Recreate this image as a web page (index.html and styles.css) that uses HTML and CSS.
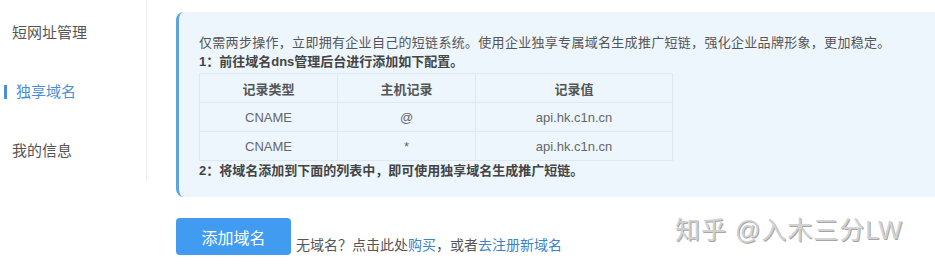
FILE: index.html
```html
<!DOCTYPE html>
<html lang="zh-CN">
<head>
<meta charset="utf-8">
<title>独享域名</title>
<link rel="stylesheet" href="styles.css">
</head>
<body>
<div class="page">
  <aside class="sidebar">
    <div class="nav-item">短网址管理</div>
    <div class="nav-item active">独享域名</div>
    <div class="nav-item">我的信息</div>
  </aside>
  <main class="main">
    <div class="alert">
      <p class="line intro">仅需两步操作，立即拥有企业自己的短链系统。使用企业独享专属域名生成推广短链，强化企业品牌形象，更加稳定。</p>
      <p class="line strong">1：前往域名dns管理后台进行添加如下配置。</p>
      <table class="records">
        <thead>
          <tr><th class="c1">记录类型</th><th class="c2">主机记录</th><th class="c3">记录值</th></tr>
        </thead>
        <tbody>
          <tr><td>CNAME</td><td>@</td><td>api.hk.c1n.cn</td></tr>
          <tr><td>CNAME</td><td>*</td><td>api.hk.c1n.cn</td></tr>
        </tbody>
      </table>
      <p class="line strong">2：将域名添加到下面的列表中，即可使用独享域名生成推广短链。</p>
    </div>
    <div class="actions">
      <button class="btn-primary">添加域名</button>
      <span class="hint">无域名？点击此处<a class="link">购买</a>，或者<a class="link">去注册新域名</a></span>
    </div>
  </main>
</div>
<div class="watermark">知乎 @入木三分LW</div>
</body>
</html>
```

FILE: styles.css
```css
html, body {
  margin: 0;
  padding: 0;
  background: #fff;
  overflow: hidden;
}
body {
  font-family: "Liberation Sans", "Noto Sans CJK SC", sans-serif;
  color: #555;
  width: 935px;
  height: 264px;
  position: relative;
}
.page {
  display: flex;
  align-items: flex-start;
}
.sidebar {
  width: 147px;
  height: 180px;
  border-right: 1px solid #eeeeee;
  padding-top: 3px;
  box-sizing: border-box;
  flex: none;
}
.nav-item {
  height: 59px;
  line-height: 59px;
  font-size: 15px;
  padding-left: 12px;
  color: #555;
  position: relative;
}
.nav-item.active {
  color: #4a8fd6;
  padding-left: 16px;
}
.nav-item.active::before {
  content: "";
  position: absolute;
  left: 4px;
  top: 23px;
  width: 3px;
  height: 14px;
  background: #4a8fd6;
}
.main {
  flex: 1;
  padding: 12px 0 0 29px;
  min-width: 0;
}
.alert {
  background: #edf6fd;
  border-left: 3px solid #5ea3dd;
  border-radius: 8px;
  padding: 21px 0 17px 20px;
  margin-right: -20px;
  box-sizing: border-box;
}
.line {
  margin: 0;
  font-size: 13px;
  line-height: 19px;
  color: #555;
  white-space: nowrap;
}
.line.intro {
  letter-spacing: 0.3px;
}
.line.strong {
  font-weight: bold;
  color: #444;
}
.records {
  border-collapse: collapse;
  margin: 2px 0 0 0;
  font-size: 13px;
  color: #666;
  width: 474px;
}
.records th,
.records td {
  border: 1px solid #dce9f3;
  height: 28px;
  padding: 0;
  text-align: center;
}
.records th {
  font-weight: bold;
  color: #555;
}
.records .c1 { width: 137px; }
.records .c2 { width: 137px; }
.actions {
  display: flex;
  align-items: flex-end;
  margin-top: 21px;
}
.btn-primary {
  width: 115px;
  height: 37px;
  border: none;
  border-radius: 4px;
  background: #419cf1;
  color: #fff;
  font-family: "Liberation Sans", "Noto Sans CJK SC", sans-serif;
  font-size: 16px;
  padding: 0;
  flex: none;
}
.hint {
  font-size: 14px;
  line-height: 20px;
  margin-left: 5px;
  margin-bottom: 0;
  color: #555;
}
.link {
  color: #3b82c8;
}
.watermark {
  position: absolute;
  left: 675px;
  top: 210px;
  font-size: 25px;
  letter-spacing: 1px;
  color: #c4c4c4;
  text-shadow: 1px 1px 0 #888;
  font-family: "Liberation Sans", "Noto Sans CJK SC", sans-serif;
  opacity: 0.75;
}
```
